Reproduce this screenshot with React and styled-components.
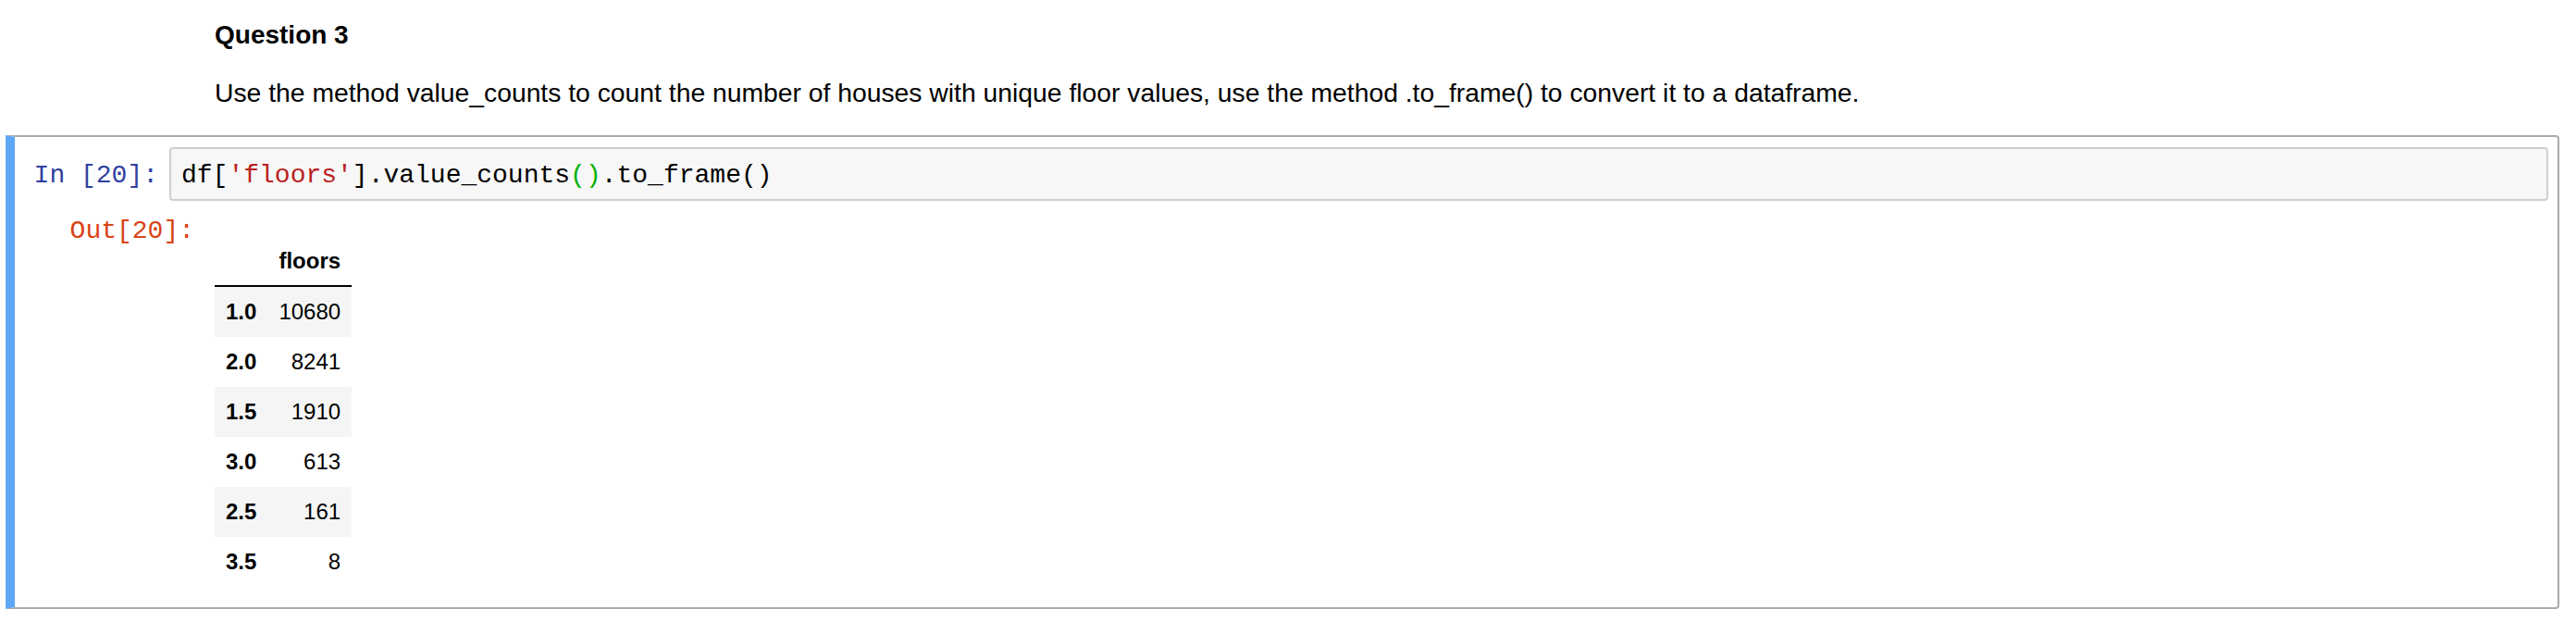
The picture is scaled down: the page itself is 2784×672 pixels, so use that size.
import React from "react";
import styled, { createGlobalStyle } from "styled-components";

const GlobalStyle = createGlobalStyle`
  body {
    margin: 0;
    background: #ffffff;
    color: #000000;
    font-family: "Liberation Sans", Arial, Helvetica, sans-serif;
  }
`;

const Page = styled.div`
  width: 2784px;
  height: 672px;
  padding-top: 22px;
  box-sizing: border-box;
  overflow: hidden;
`;

const Markdown = styled.div`
  padding-left: 232px;
  font-size: 28px;
  line-height: 32px;
`;

const Heading = styled.h4`
  margin: 0 0 30px 0;
  font-size: 28px;
  line-height: 32px;
  font-weight: bold;
`;

const Paragraph = styled.p`
  margin: 0 0 30px 0;
  font-size: 28.3px;
`;

const Cell = styled.div`
  margin-left: 6px;
  width: 2760px;
  height: 512px;
  box-sizing: border-box;
  border: 2px solid #ababab;
  border-left: 10px solid #5ea7f4;
  border-radius: 0 4px 4px 0;
  padding: 11px 10px 10px 0;
  display: flex;
  flex-direction: column;
`;

const Row = styled.div`
  display: flex;
  align-items: flex-start;
`;

const Prompt = styled.div`
  flex: none;
  width: ${(p) => p.$width}px;
  box-sizing: border-box;
  padding: ${(p) => p.$top}px 12px 0 0;
  text-align: right;
  font-family: "Liberation Mono", "Courier New", monospace;
  font-size: 28px;
  line-height: 34px;
  color: ${(p) => p.$color};
  white-space: pre;
`;

const InputBox = styled.div`
  flex: 1;
  height: 58px;
  box-sizing: border-box;
  border: 2px solid #cfcfcf;
  border-radius: 4px;
  background: #f7f7f7;
  padding: 12px 11px 8px 11px;
  font-family: "Liberation Mono", "Courier New", monospace;
  font-size: 28px;
  line-height: 34px;
  white-space: pre;
`;

const Tok = styled.span`
  color: ${(p) => p.$color || "#000000"};
`;

const OutputRow = styled(Row)`
  margin-top: 10px;
`;

const OutputArea = styled.div`
  padding: 28px 0 0 10px;
`;

const Table = styled.table`
  border-collapse: collapse;
  border: none;
  font-family: "Liberation Sans", Arial, Helvetica, sans-serif;
  font-size: 24px;
  color: #000000;
`;

const Head = styled.thead`
  border-bottom: 2px solid #000000;
`;

const HeadCell = styled.th`
  padding: 12px;
  line-height: 29px;
  text-align: right;
  font-weight: bold;
`;

const BodyRow = styled.tr`
  background: ${(p) => (p.$striped ? "#f5f5f5" : "#ffffff")};
`;

const IndexCell = styled.th`
  padding: 12px;
  line-height: 30px;
  text-align: right;
  font-weight: bold;
`;

const ValueCell = styled.td`
  padding: 12px;
  line-height: 30px;
  text-align: right;
`;

const rows = [
  ["1.0", 10680],
  ["2.0", 8241],
  ["1.5", 1910],
  ["3.0", 613],
  ["2.5", 161],
  ["3.5", 8],
];

export default function App() {
  return (
    <Page>
      <GlobalStyle />
      <Markdown>
        <Heading>Question 3</Heading>
        <Paragraph>
          Use the method value_counts to count the number of houses with unique
          floor values, use the method .to_frame() to convert it to a dataframe.
        </Paragraph>
      </Markdown>
      <Cell>
        <Row>
          <Prompt $width={167} $top={14} $color="#303f9f">
            In [20]:
          </Prompt>
          <InputBox>
            <Tok>df[</Tok>
            <Tok $color="#ba2121">'floors'</Tok>
            <Tok>].value_counts</Tok>
            <Tok $color="#00b000">()</Tok>
            <Tok>.to_frame()</Tok>
          </InputBox>
        </Row>
        <OutputRow>
          <Prompt $width={206} $top={6} $color="#d84315">
            Out[20]:
          </Prompt>
          <OutputArea>
            <Table>
              <Head>
                <tr>
                  <HeadCell></HeadCell>
                  <HeadCell>floors</HeadCell>
                </tr>
              </Head>
              <tbody>
                {rows.map(([idx, val], i) => (
                  <BodyRow key={idx} $striped={i % 2 === 0}>
                    <IndexCell>{idx}</IndexCell>
                    <ValueCell>{val}</ValueCell>
                  </BodyRow>
                ))}
              </tbody>
            </Table>
          </OutputArea>
        </OutputRow>
      </Cell>
    </Page>
  );
}
